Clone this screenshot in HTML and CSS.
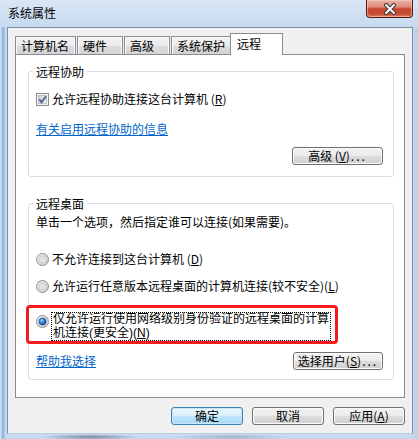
FILE: index.html
```html
<!DOCTYPE html>
<html lang="zh-CN">
<head>
<meta charset="utf-8">
<title>系统属性</title>
<link rel="stylesheet" href="styles.css">
</head>
<body>
<div class="window">
  <div class="titlebar">
    <span class="title">系统属性</span>
    <span class="close" aria-label="关闭">
      <svg width="14" height="12" viewBox="0 0 14 12">
        <path d="M3 2 L11 10 M11 2 L3 10" stroke="#3a3a3a" stroke-width="4" stroke-linecap="round" fill="none"/>
        <path d="M3 2 L11 10 M11 2 L3 10" stroke="#ffffff" stroke-width="2" stroke-linecap="round" fill="none"/>
      </svg>
    </span>
  </div>
  <div class="client">
    <div class="tabs">
      <div class="tab">计算机名</div>
      <div class="tab">硬件</div>
      <div class="tab">高级</div>
      <div class="tab">系统保护</div>
      <div class="tab active">远程</div>
    </div>
    <div class="panel">
      <fieldset class="group g1">
        <legend>远程协助</legend>
        <div class="check-row">
          <span class="checkbox">
            <svg width="13" height="13" viewBox="0 0 13 13">
              <defs><linearGradient id="cbg" x1="0" y1="0" x2="1" y2="1"><stop offset="0" stop-color="#cfd0d2"/><stop offset="1" stop-color="#f6f6f6"/></linearGradient></defs>
              <rect x="0.5" y="0.5" width="12" height="12" fill="#f4f4f4" stroke="#8e8f8f"/>
              <rect x="2.5" y="2.5" width="8" height="8" fill="url(#cbg)" stroke="#b4b6ba" stroke-width="0.8"/>
              <path d="M3.2 6.4 L5.6 9.2 L10 3.2" stroke="#4d5f8f" stroke-width="1.9" fill="none"/>
            </svg>
          </span>
          <span>允许远程协助连接这台计算机 (<u>R</u>)</span>
        </div>
        <div class="link-row"><a class="link" href="#">有关启用远程协助的信息</a></div>
        <div class="btn-row"><span class="btn wide">高级 (<u>V</u>)<span class="dots">...</span></span></div>
      </fieldset>
      <fieldset class="group g2">
        <legend>远程桌面</legend>
        <p class="desc">单击一个选项，然后指定谁可以连接(如果需要)。</p>
        <div class="radio-row r1">
          <span class="radio">
            <svg width="13" height="13" viewBox="0 0 13 13">
              <defs><linearGradient id="rg1" x1="0" y1="0" x2="1" y2="1"><stop offset="0" stop-color="#f6f6f6"/><stop offset="1" stop-color="#c9c9c9"/></linearGradient></defs>
              <circle cx="6.5" cy="6.5" r="6" fill="url(#rg1)" stroke="#8e8f8f"/>
              <circle cx="6.5" cy="6.5" r="3.8" fill="#e2e2e2" stroke="#c6c6c6" stroke-width="0.8"/>
            </svg>
          </span>
          <span>不允许连接到这台计算机 (<u>D</u>)</span>
        </div>
        <div class="radio-row r2">
          <span class="radio">
            <svg width="13" height="13" viewBox="0 0 13 13">
              <defs><linearGradient id="rg2" x1="0" y1="0" x2="1" y2="1"><stop offset="0" stop-color="#f6f6f6"/><stop offset="1" stop-color="#c9c9c9"/></linearGradient></defs>
              <circle cx="6.5" cy="6.5" r="6" fill="url(#rg2)" stroke="#8e8f8f"/>
              <circle cx="6.5" cy="6.5" r="3.8" fill="#e2e2e2" stroke="#c6c6c6" stroke-width="0.8"/>
            </svg>
          </span>
          <span>允许运行任意版本远程桌面的计算机连接(较不安全)(<u>L</u>)</span>
        </div>
        <div class="radio-row r3">
          <span class="radio">
            <svg width="13" height="13" viewBox="0 0 13 13">
              <defs>
                <linearGradient id="rg3" x1="0" y1="0" x2="1" y2="1"><stop offset="0" stop-color="#f6f6f6"/><stop offset="1" stop-color="#c9c9c9"/></linearGradient>
                <radialGradient id="dot" cx="0.4" cy="0.35" r="0.7"><stop offset="0" stop-color="#9fd4ff"/><stop offset="0.5" stop-color="#2d7fd6"/><stop offset="1" stop-color="#14457e"/></radialGradient>
              </defs>
              <circle cx="6.5" cy="6.5" r="6" fill="url(#rg3)" stroke="#8e8f8f"/>
              <circle cx="6.5" cy="6.5" r="3.6" fill="url(#dot)" stroke="#1d4f8a" stroke-width="0.7"/>
            </svg>
          </span>
          <span class="focus">
            <span class="fline">仅允许运行使用网络级别身份验证的远程桌面的计算</span>
            <span class="fline">机连接(更安全)(<u>N</u>)</span>
          </span>
          <span class="annot"></span>
        </div>
        <div class="help-row">
          <a class="link" href="#">帮助我选择</a>
          <span class="btn wide2">选择用户(<u>S</u>)<span class="dots">...</span></span>
        </div>
      </fieldset>
    </div>
    <div class="footer">
      <span class="btn fbtn default">确定</span>
      <span class="btn fbtn">取消</span>
      <span class="btn fbtn">应用(<u>A</u>)</span>
    </div>
  </div>
</div>
</body>
</html>
```
FILE: styles.css
```css
* { box-sizing: border-box; }
html, body { margin: 0; padding: 0; }
body {
  width: 418px;
  height: 439px;
  overflow: hidden;
  font-family: "Noto Sans CJK SC", "Noto Sans", sans-serif;
  font-size: 12px;
  color: #000;
}
.window {
  width: 418px;
  height: 439px;
  background:
    radial-gradient(ellipse 70px 5px at 165px 22px, rgba(80, 100, 140, 0.35), rgba(80, 100, 140, 0)),
    radial-gradient(ellipse 50px 3px at 90px 437px, rgba(60, 70, 90, 0.55), rgba(60, 70, 90, 0)),
    radial-gradient(ellipse 60px 3px at 230px 437px, rgba(90, 100, 120, 0.35), rgba(90, 100, 120, 0)),
    linear-gradient(90deg, #d6e6f6 0, #8fb1dc 3px, #c8dbf0 6px, #c8dbf0 411px, #b7cfe9 418px),
    #c8dbf0;
}
.titlebar {
  height: 27px;
  display: flex;
  justify-content: space-between;
  align-items: flex-start;
  background: linear-gradient(#d8e6f5, #c7daef);
}
.title {
  margin: 6px 0 0 8px;
  line-height: 14px;
}
.close {
  width: 47px;
  height: 18px;
  margin-right: 5px;
  display: flex;
  align-items: center;
  justify-content: center;
  border: 1px solid #5a1a10;
  border-top: 0;
  border-radius: 0 0 4px 4px;
  background: linear-gradient(#eab1a4 0%, #df8c7b 40%, #c9462f 52%, #c64a33 80%, #db7a62 100%);
  box-shadow: inset 0 0 0 1px rgba(255, 220, 210, 0.5);
}
.client {
  margin-left: 7px;
  width: 406px;
  border: 1px solid #7e8fa4;
  border-bottom-color: #bccde0;
  background: #f0f0f0;
  padding: 5px 7px 8px;
}
.tabs {
  display: flex;
  align-items: flex-end;
  height: 21px;
}
.tab {
  height: 18px;
  min-width: 46px;
  padding: 2px 6px 0 5px;
  line-height: 14px;
  white-space: nowrap;
  border: 1px solid #898c95;
  border-bottom: 0;
  margin-right: 1px;
  background: linear-gradient(#f3f3f3 0%, #ebebeb 50%, #dedede 51%, #d3d3d3 100%);
  box-shadow: inset 1px 1px 0 #fcfcfc, inset -1px 0 0 #fcfcfc;
}
.tab.active {
  height: 22px;
  min-width: 53px;
  margin: 0 0 -1px -3px;
  padding: 3px 6px 0 6px;
  background: #fff;
  box-shadow: none;
  position: relative;
  z-index: 1;
}
.panel {
  height: 344px;
  border: 1px solid #898c95;
  background: #fff;
  padding: 9px 10px 16px 12px;
}
.group {
  margin: 0;
  min-width: 0;
  padding: 0 10px 11px 7px;
  border: 1px solid #d5dfe5;
  border-radius: 3px;
}
.group legend {
  padding: 0 3px;
  margin-left: -3px;
  line-height: 15px;
}
.g2 {
  margin-top: 19px;
  padding-bottom: 9px;
}
.check-row {
  margin-top: 13px;
  display: flex;
  align-items: center;
  line-height: 14px;
}
.checkbox, .radio {
  width: 13px;
  height: 13px;
  flex: none;
  margin-right: 3px;
  display: block;
}
.checkbox svg, .radio svg { display: block; }
.link-row {
  margin-top: 16px;
  line-height: 14px;
}
.link {
  color: #0066cc;
  text-decoration: underline;
}
.btn-row {
  margin-top: 11px;
  display: flex;
  justify-content: flex-end;
}
.btn {
  height: 18px;
  display: flex;
  align-items: center;
  justify-content: center;
  line-height: 14px;
  white-space: nowrap;
  border: 1px solid #707070;
  border-radius: 3px;
  background: linear-gradient(#f2f2f2 0%, #ebebeb 48%, #dddddd 52%, #cfcfcf 100%);
  box-shadow: inset 0 0 0 1px #fbfbfb;
}
.btn.wide { width: 91px; }
.btn.wide2 { width: 90px; }
.dots { letter-spacing: 2px; margin-left: 1px; }
.desc {
  margin: 4px 0 0;
  line-height: 14px;
}
.radio-row {
  display: flex;
  align-items: center;
  line-height: 14px;
}
.r1 { margin-top: 23px; }
.r2 { margin-top: 13px; }
.r3 {
  margin-top: 19px;
  align-items: flex-start;
  position: relative;
}
.r3 .radio {
  margin-top: 3px;
  margin-right: 2px;
}
.focus {
  width: 280px;
  padding: 0 1px;
  border: 1px dotted #000;
}
.fline {
  display: block;
  font-family: "Liberation Sans", "Noto Sans CJK SC", sans-serif;
  line-height: 13.5px;
  white-space: nowrap;
}
.annot {
  position: absolute;
  left: -10px;
  top: -7px;
  width: 312px;
  height: 39px;
  border: 3px solid #f41c1c;
  border-radius: 4px;
}
.help-row {
  margin-top: 11px;
  display: flex;
  justify-content: space-between;
  align-items: center;
  line-height: 14px;
}
.footer {
  margin-top: 9px;
  display: flex;
  justify-content: flex-end;
  gap: 9px;
}
.fbtn { width: 72px; }
.btn.default {
  border-color: #3c7fb1;
  background: linear-gradient(#eaf6fd 0%, #d9f0fc 48%, #bee6fd 52%, #a7d9f5 100%);
  box-shadow: inset 0 0 0 1px #c9e6f7;
}
```
